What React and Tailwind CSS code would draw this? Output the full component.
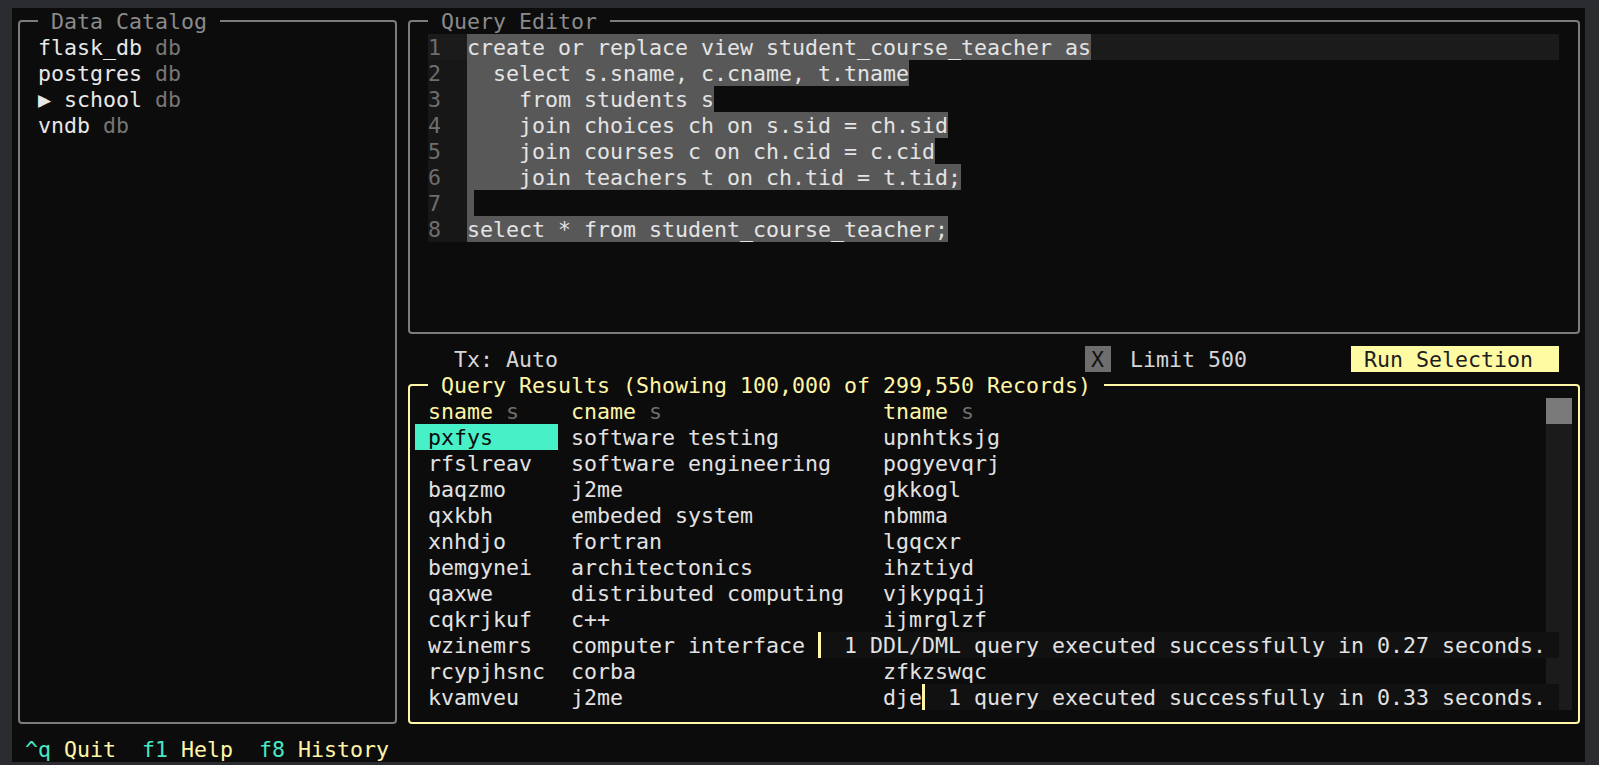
import React from "react";

const GRAY_BORDER = "border-[#7c7c7c]";

function CatalogItem({ name, arrow }) {
  return (
    <div className="h-[26px] pt-[1px] whitespace-pre">
      {arrow ? <span className="text-[#e8e8e8]">▶ </span> : null}
      <span className="text-[#e8e8e8]">{name}</span>
      <span className="text-[#767676]"> db</span>
    </div>
  );
}

const codeLines = [
  "create or replace view student_course_teacher as",
  "  select s.sname, c.cname, t.tname",
  "    from students s",
  "    join choices ch on s.sid = ch.sid",
  "    join courses c on ch.cid = c.cid",
  "    join teachers t on ch.tid = t.tid;",
  "",
  "select * from student_course_teacher;",
];

const rows = [
  ["pxfys", "software testing", "upnhtksjg"],
  ["rfslreav", "software engineering", "pogyevqrj"],
  ["baqzmo", "j2me", "gkkogl"],
  ["qxkbh", "embeded system", "nbmma"],
  ["xnhdjo", "fortran", "lgqcxr"],
  ["bemgynei", "architectonics", "ihztiyd"],
  ["qaxwe", "distributed computing", "vjkypqij"],
  ["cqkrjkuf", "c++", "ijmrglzf"],
  ["wzinemrs", "computer interface", ""],
  ["rcypjhsnc", "corba", "zfkzswqc"],
  ["kvamveu", "j2me", "dje"],
];

function Toast({ top, left, width, text }) {
  return (
    <div
      className="absolute h-[26px] flex bg-[#111111]"
      style={{ top, left, width }}
    >
      <div className="w-[3px] h-[26px] bg-[#fff7a5]" />
      <div className="ml-[23px] pt-[1px] whitespace-pre text-[#e2e2e2]">{text}</div>
    </div>
  );
}

export default function App() {
  return (
    <div className="w-[1599px] h-[765px] bg-[#2a2c30] pt-[8px] pl-[12px] overflow-hidden">
      <div className="w-[1573px] h-[754px] bg-[#0c0c0c] flex flex-col font-['DejaVu_Sans_Mono','Liberation_Mono',monospace] text-[21.6px] leading-[26px] text-[#e2e2e2]">
        <div className="flex h-[728px]">
          {/* Data Catalog */}
          <div className="w-[390px] h-[728px] px-[5.5px] py-[12px]">
            <div className={`relative h-full border-2 ${GRAY_BORDER} rounded-[4px] pl-[18.5px] pt-[12px]`}>
              <div className="absolute top-[-14px] left-[18.5px] h-[26px] pt-[1px] whitespace-pre bg-[#0c0c0c] text-[#8a8a8a]">
                {" Data Catalog "}
              </div>
              <CatalogItem name="flask_db" />
              <CatalogItem name="postgres" />
              <CatalogItem name="school" arrow />
              <CatalogItem name="vndb" />
            </div>
          </div>

          <div className="w-[1183px] flex flex-col">
            {/* Query Editor */}
            <div className="h-[338px] px-[5.5px] py-[12px]">
              <div className={`relative h-full border-2 ${GRAY_BORDER} rounded-[4px] pl-[18.5px] pr-[18.5px] pt-[12px]`}>
                <div className="absolute top-[-14px] left-[18.5px] h-[26px] pt-[1px] whitespace-pre bg-[#0c0c0c] text-[#8a8a8a]">
                  {" Query Editor "}
                </div>
                {codeLines.map((line, i) => (
                  <div
                    key={i}
                    className={`flex h-[26px] whitespace-pre ${i === 0 ? "bg-[#1b1b1b]" : ""}`}
                  >
                    <div className={`w-[39px] shrink-0 h-[26px] pt-[1px] text-[#6e6e6e] ${i === 0 ? "bg-[#1b1b1b]" : "bg-[#171717]"}`}>
                      {String(i + 1)}
                    </div>
                    {line === "" ? (
                      <div className="w-[7px] h-[26px] bg-[#585858]" />
                    ) : (
                      <span className="bg-[#585858] text-[#e4e4e4] h-[26px] pt-[1px]">{line}</span>
                    )}
                  </div>
                ))}
              </div>
            </div>

            {/* Controls row */}
            <div className="h-[26px] flex whitespace-pre">
              <div className="w-[52px] shrink-0" />
              <div className="w-[104px] shrink-0 pt-[1px] text-[#d6d6d6]">Tx: Auto</div>
              <div className="w-[526.5px] shrink-0" />
              <div className="w-[26px] shrink-0 h-[26px] pt-[1px] bg-[#6e6e6e] text-[#121212] text-center">X</div>
              <div className="w-[19.5px] shrink-0" />
              <div className="w-[117px] shrink-0 pt-[1px] text-[#d6d6d6]">Limit 500</div>
              <div className="w-[104px] shrink-0" />
              <div className="w-[208px] shrink-0 h-[26px] pt-[1px] bg-[#fffba3] text-[#1e1e1e] pl-[13px]">Run Selection</div>
            </div>

            {/* Query Results */}
            <div className="h-[364px] px-[5.5px] py-[12px]">
              <div className="relative h-full border-2 border-[#fff7a5] rounded-[4px] pl-[5.5px] pr-[5.5px] pt-[12px]">
                <div className="absolute top-[-14px] left-[18.5px] h-[26px] pt-[1px] whitespace-pre bg-[#0c0c0c] text-[#fff7a5]">
                  {" Query Results (Showing 100,000 of 299,550 Records) "}
                </div>
                <div className="relative flex h-[312px]">
                  <div className="w-[1131px] shrink-0">
                    <div className="flex h-[26px] pt-[1px] whitespace-pre">
                      <div className="w-[143px] shrink-0 pl-[13px]">
                        <span className="text-[#fff7a5]">sname</span>
                        <span className="text-[#6e6e6e]"> s</span>
                      </div>
                      <div className="w-[312px] shrink-0 pl-[13px]">
                        <span className="text-[#fff7a5]">cname</span>
                        <span className="text-[#6e6e6e]"> s</span>
                      </div>
                      <div className="flex-1 pl-[13px]">
                        <span className="text-[#fff7a5]">tname</span>
                        <span className="text-[#6e6e6e]"> s</span>
                      </div>
                    </div>
                    {rows.map((r, i) => (
                      <div key={i} className="flex h-[26px] whitespace-pre">
                        <div
                          className={`w-[143px] shrink-0 h-[26px] pt-[1px] pl-[13px] ${
                            i === 0 ? "bg-[#48f0c8] text-[#0c0c0c]" : "text-[#e2e2e2]"
                          }`}
                        >
                          {r[0]}
                        </div>
                        <div className="w-[312px] shrink-0 pt-[1px] pl-[13px] text-[#e2e2e2]">{r[1]}</div>
                        <div className="flex-1 pt-[1px] pl-[13px] text-[#e2e2e2]">{r[2]}</div>
                      </div>
                    ))}
                  </div>
                  <div className="w-[26px] shrink-0 flex flex-col">
                    <div className="h-[26px] bg-[#7a7a7a]" />
                    <div className="flex-1 bg-[#1b1b1b]" />
                  </div>
                  <Toast
                    top={234}
                    left={403}
                    width={741}
                    text="1 DDL/DML query executed successfully in 0.27 seconds."
                  />
                  <Toast
                    top={286}
                    left={507}
                    width={637}
                    text="1 query executed successfully in 0.33 seconds."
                  />
                </div>
              </div>
            </div>
          </div>
        </div>

        {/* Footer */}
        <div className="h-[26px] pt-[1px] whitespace-pre pl-[13px]">
          <span className="text-[#48e6c4]">^q</span>
          <span className="text-[#fff7a5]"> Quit  </span>
          <span className="text-[#48e6c4]">f1</span>
          <span className="text-[#fff7a5]"> Help  </span>
          <span className="text-[#48e6c4]">f8</span>
          <span className="text-[#fff7a5]"> History</span>
        </div>
      </div>
    </div>
  );
}
